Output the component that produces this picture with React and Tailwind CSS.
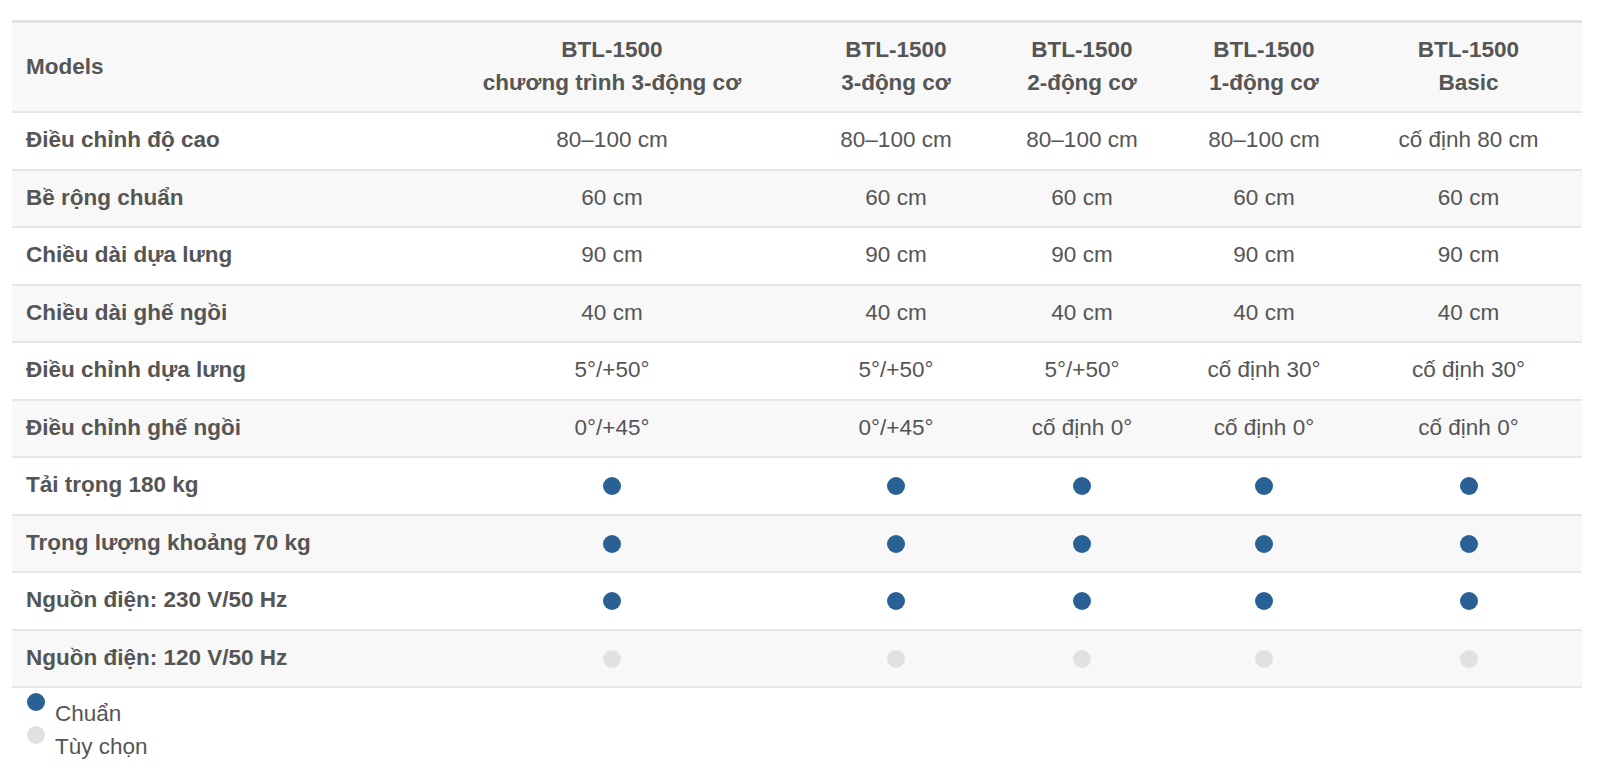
const models = [
  ['BTL-1500', 'chương trình 3-động cơ'],
  ['BTL-1500', '3-động cơ'],
  ['BTL-1500', '2-động cơ'],
  ['BTL-1500', '1-động cơ'],
  ['BTL-1500', 'Basic'],
];

// 'S' = standard (blue dot), 'O' = optional (grey dot)
const rows = [
  ['Điều chỉnh độ cao', ['80–100 cm', '80–100 cm', '80–100 cm', '80–100 cm', 'cố định 80 cm']],
  ['Bề rộng chuẩn', ['60 cm', '60 cm', '60 cm', '60 cm', '60 cm']],
  ['Chiều dài dựa lưng', ['90 cm', '90 cm', '90 cm', '90 cm', '90 cm']],
  ['Chiều dài ghế ngồi', ['40 cm', '40 cm', '40 cm', '40 cm', '40 cm']],
  ['Điều chỉnh dựa lưng', ['5°/+50°', '5°/+50°', '5°/+50°', 'cố định 30°', 'cố định 30°']],
  ['Điều chỉnh ghế ngồi', ['0°/+45°', '0°/+45°', 'cố định 0°', 'cố định 0°', 'cố định 0°']],
  ['Tải trọng 180 kg', ['S', 'S', 'S', 'S', 'S']],
  ['Trọng lượng khoảng 70 kg', ['S', 'S', 'S', 'S', 'S']],
  ['Nguồn điện: 230 V/50 Hz', ['S', 'S', 'S', 'S', 'S']],
  ['Nguồn điện: 120 V/50 Hz', ['O', 'O', 'O', 'O', 'O']],
];

const colWidths = ['w-[411px]', 'w-[378px]', 'w-[190px]', 'w-[182px]', 'w-[182px]', 'w-[227px]'];

function Dot({ optional }) {
  return (
    <span
      className={`inline-block h-[18px] w-[18px] rounded-full align-middle ${
        optional ? 'bg-[#e1e1e1]' : 'bg-[#2a6195]'
      }`}
    />
  );
}

function Cell({ value }) {
  if (value === 'S') return <Dot />;
  if (value === 'O') return <Dot optional />;
  return value;
}

export default function App() {
  return (
    <div className="min-h-screen bg-white px-3 pt-5 font-['Liberation_Sans',Arial,sans-serif] text-[#555]">
      <table className="w-[1570px] table-fixed border-collapse border-t-[3px] border-[#e3e3e3] text-[22.5px] leading-[33px]">
        <colgroup>
          {colWidths.map((w, i) => (
            <col key={i} className={w} />
          ))}
        </colgroup>
        <thead>
          <tr className="border-b-2 border-[#e6e6e6] bg-[#f8f8f8]">
            <th className="px-[14px] pt-[10px] pb-3 text-left align-middle font-bold">Models</th>
            {models.map(([a, b], i) => (
              <th key={i} className="pt-[10px] pb-3 text-center font-bold">
                {a}
                <br />
                {b}
              </th>
            ))}
          </tr>
        </thead>
        <tbody>
          {rows.map(([label, cells], r) => (
            <tr
              key={r}
              className={`border-b-2 border-[#e6e6e6] ${r % 2 === 0 ? 'bg-white' : 'bg-[#f8f8f8]'}`}
            >
              <td className="h-[57.5px] px-[14px] pb-[2px] text-left font-bold">{label}</td>
              {cells.map((c, i) => (
                <td key={i} className="pb-[2px] text-center">
                  <Cell value={c} />
                </td>
              ))}
            </tr>
          ))}
        </tbody>
      </table>

      <div className="mt-[3px] pl-[15px] text-[22.5px] leading-[34px] font-['Liberation_Sans_Narrow','Liberation_Sans',sans-serif]">
        <div className="flex items-start gap-[10px]">
          <span className="mt-[2px] inline-block h-[18px] w-[18px] shrink-0 rounded-full bg-[#2a6195]" />
          <span className="pt-[6px]">Chuẩn</span>
        </div>
        <div className="-mt-[7px] flex items-start gap-[10px]">
          <span className="mt-[2px] inline-block h-[18px] w-[18px] shrink-0 rounded-full bg-[#e1e1e1]" />
          <span className="pt-[6px]">Tùy chọn</span>
        </div>
      </div>
    </div>
  );
}
